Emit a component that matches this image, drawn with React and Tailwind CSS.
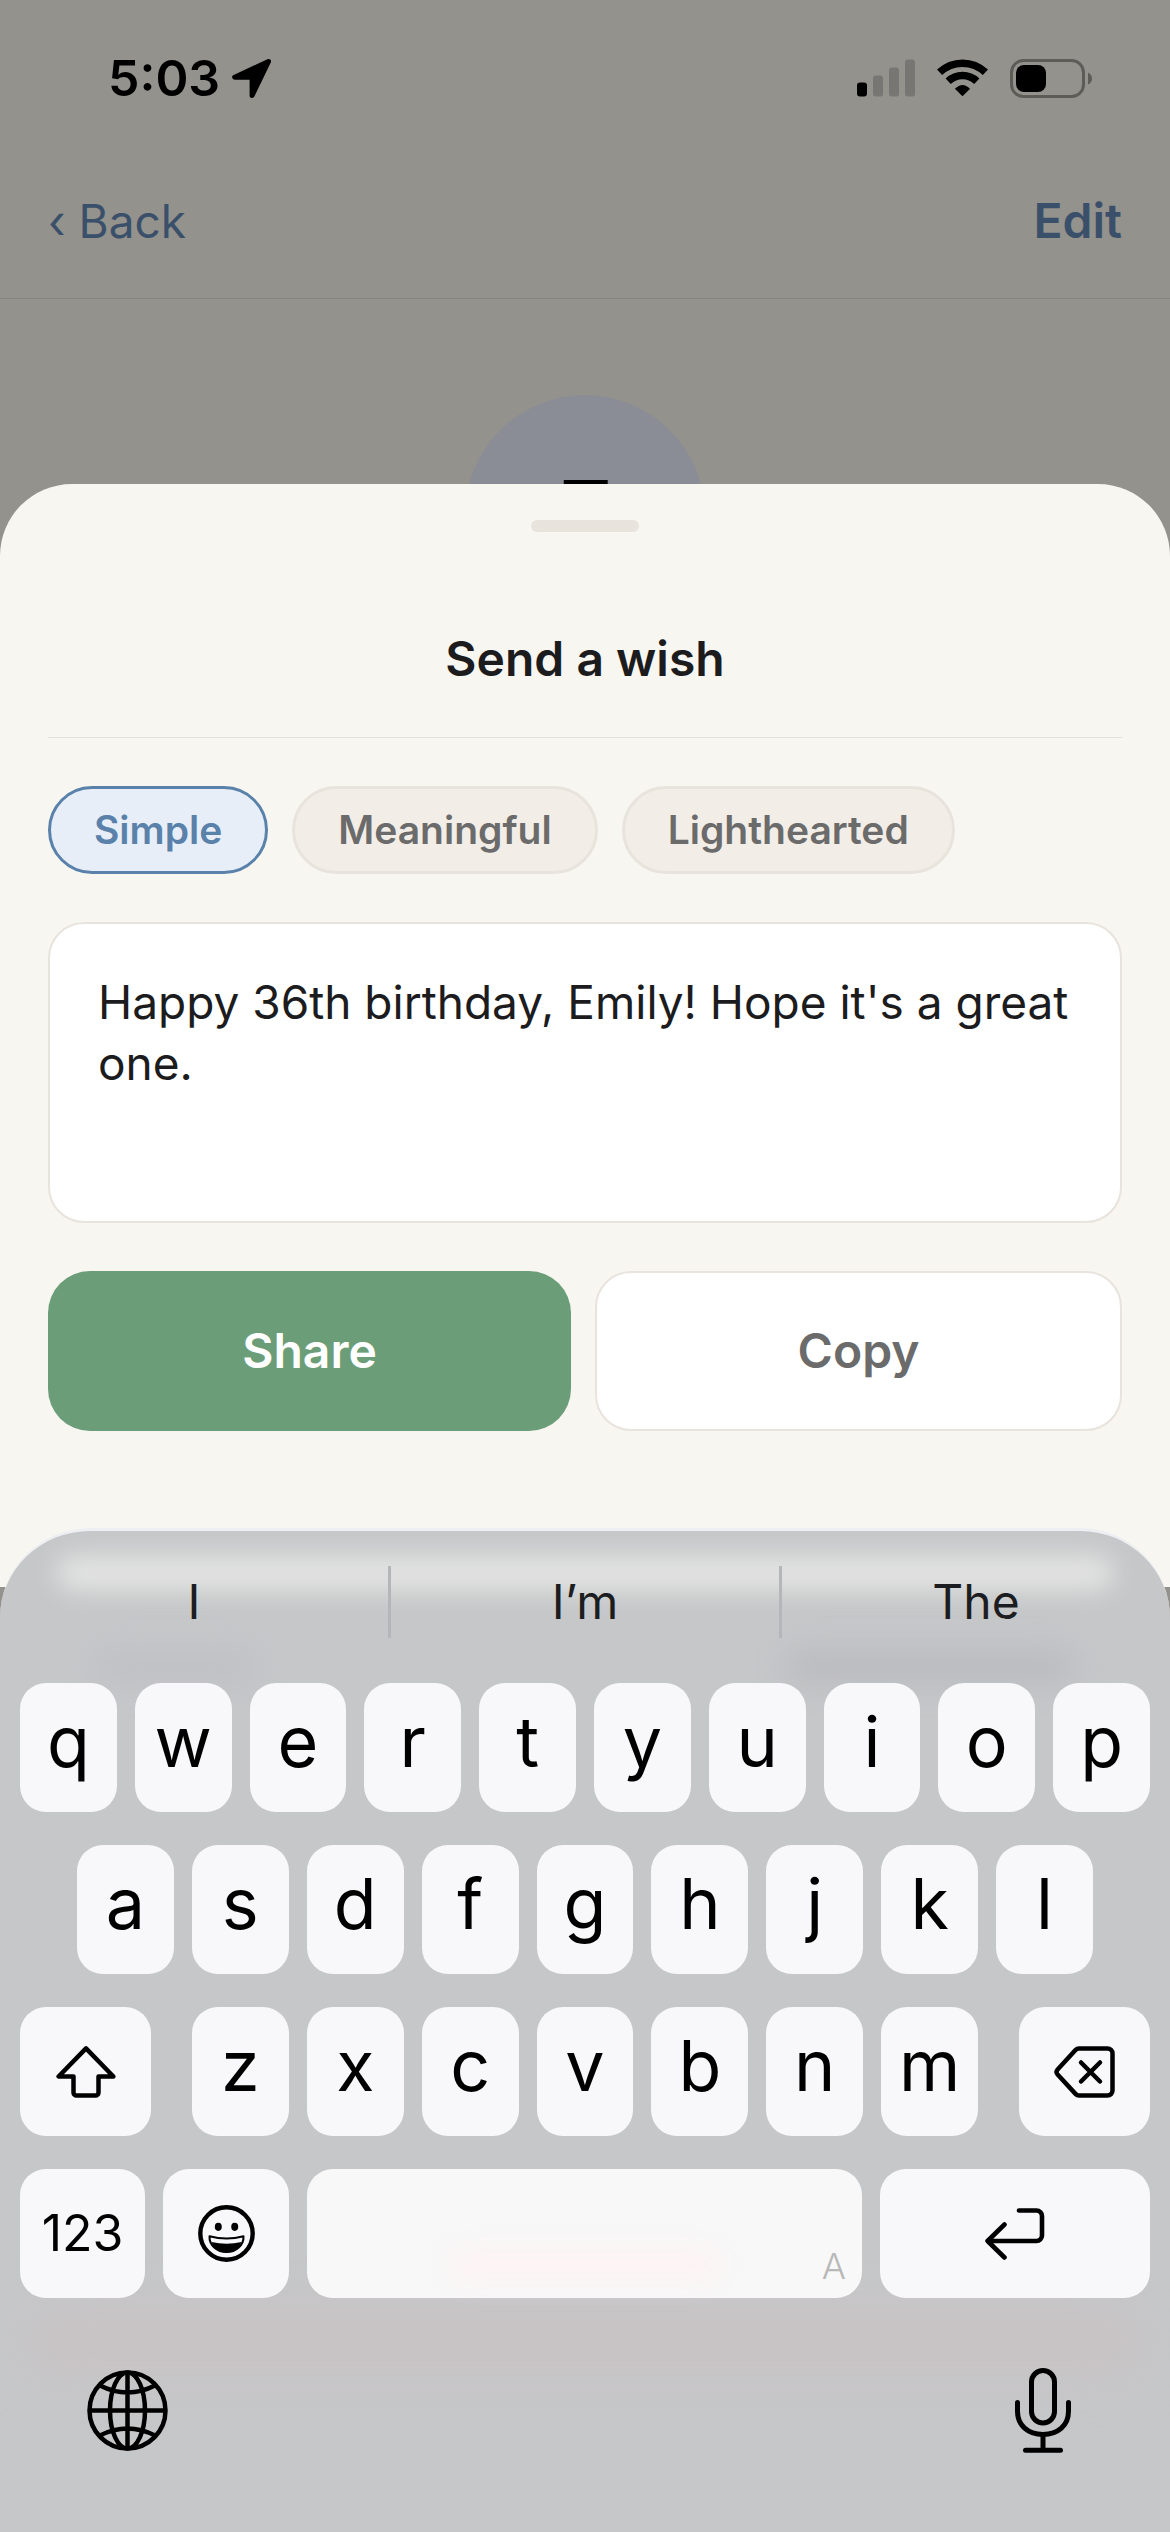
import { useState } from 'react'

const WISHES = {
  Simple: "Happy 36th birthday, Emily! Hope it's a great one.",
  Meaningful: 'Happy birthday, Emily! So grateful to have you in my life.',
  Lighthearted: 'Happy 36th, Emily! Eat all the cake today.',
}

const SUGGESTIONS = ['I', 'I’m', 'The']

function LocationIcon() {
  return (
    <svg className="h-[39px] w-[39px]" viewBox="0 0 39 39" aria-hidden="true">
      <path d="M36.5 2.5 2.7 18.2H20.1V36.5Z" fill="#000" stroke="#000" strokeWidth="5" strokeLinejoin="round" />
    </svg>
  )
}

function SignalIcon() {
  return (
    <svg className="h-[38px] w-[58px]" viewBox="0 0 58 38" aria-hidden="true">
      <rect x="0" y="23.5" width="10" height="14" rx="3" />
      <g fill="#777672">
        <rect x="16" y="16.5" width="10" height="21" rx="3" />
        <rect x="32" y="8.5" width="10" height="29" rx="3" />
        <rect x="48" y="0.5" width="10" height="37" rx="3" />
      </g>
    </svg>
  )
}

function WifiIcon() {
  return (
    <svg className="h-[38px] w-[51px]" viewBox="0 0 51 38" aria-hidden="true">
      <g fill="none" stroke="#000" strokeWidth="7.5">
        <path d="M2.6 13.3A33.2 33.2 0 0 1 48.4 13.3" />
        <path d="M11.2 22.3A20.7 20.7 0 0 1 39.8 22.3" />
      </g>
      <path d="M25.5 37.3 17.9 29.8Q25.5 22 33.1 29.8Z" />
    </svg>
  )
}

function BatteryIcon() {
  return (
    <svg className="h-[39px] w-[82px]" viewBox="0 0 82 39" aria-hidden="true">
      <rect x="1.5" y="1.5" width="72" height="36" rx="12" fill="none" stroke="#5d5c59" strokeWidth="3" />
      <rect x="6" y="6" width="30" height="27" rx="8" />
      <path d="M78 13.5Q82 15.5 82 19.5T78 25.5Z" fill="#5d5c59" />
    </svg>
  )
}

function ShiftIcon() {
  return (
    <svg className="h-[52px] w-[60px]" viewBox="0 0 60 52" fill="none" stroke="#000" strokeWidth="4.5" strokeLinejoin="round" aria-hidden="true">
      <path d="M30 2.4 2.6 30.5H17.5V46.5a3 3 0 0 0 3 3H39.5a3 3 0 0 0 3-3V30.5H57.4Z" />
    </svg>
  )
}

function BackspaceIcon() {
  return (
    <svg className="h-[52px] w-[61px]" viewBox="0 0 61 52" fill="none" stroke="#000" strokeWidth="4.5" strokeLinecap="round" strokeLinejoin="round" aria-hidden="true">
      <path d="M25 2.5H53.5a5 5 0 0 1 5 5V44.5a5 5 0 0 1-5 5H25q-2 0-3.5-1.6L3.4 28.2q-1.8-2.2 0-4.4L21.5 4.1Q23 2.5 25 2.5Z" />
      <path d="M27 16.5 46 35.5M46 16.5 27 35.5" />
    </svg>
  )
}

function ReturnIcon() {
  return (
    <svg className="h-[52px] w-[60px]" viewBox="0 0 60 52" fill="none" stroke="#000" strokeWidth="4.6" strokeLinecap="round" strokeLinejoin="round" aria-hidden="true">
      <path d="M34 2.5H51.5a5.5 5.5 0 0 1 5.5 5.5V27.5a5.5 5.5 0 0 1-5.5 5.5H3" />
      <path d="M19.5 16.5 2.6 33 19.5 49.5" />
    </svg>
  )
}

function EmojiIcon() {
  return (
    <svg className="h-[57px] w-[57px]" viewBox="0 0 57 57" aria-hidden="true">
      <circle cx="28.5" cy="28.5" r="26.2" fill="none" stroke="#000" strokeWidth="4.4" />
      <ellipse cx="20.3" cy="21.8" rx="3.5" ry="4.1" />
      <ellipse cx="36.7" cy="21.8" rx="3.5" ry="4.1" />
      <path d="M11.5 31.2Q28.5 36 45.5 31.2C46 40 38 47 28.5 47S11 40 11.5 31.2Z" fill="none" stroke="#000" strokeWidth="2" strokeLinejoin="round" />
      <path d="M13.5 37Q28.5 40.5 43.5 37C41 43.5 35.5 47.5 28.5 47.5S16 43.5 13.5 37Z" />
    </svg>
  )
}

function GlobeIcon() {
  return (
    <svg className="h-[81px] w-[81px]" viewBox="0 0 81 81" fill="none" stroke="#000" strokeWidth="4.5" aria-hidden="true">
      <circle cx="40.5" cy="40.5" r="38" />
      <ellipse cx="40.5" cy="40.5" rx="17.5" ry="38" />
      <path d="M40.5 2.5V78.5M2.5 40.5H78.5M13 15.5Q40.5 29.5 68 15.5M13 65.5Q40.5 51.5 68 65.5" />
    </svg>
  )
}

function MicIcon() {
  return (
    <svg className="h-[85px] w-[56px]" viewBox="0 0 56 85" fill="none" stroke="#000" strokeWidth="5" strokeLinecap="round" aria-hidden="true">
      <rect x="16.5" y="2.5" width="23" height="52.5" rx="11.5" />
      <path d="M2.5 34.5V43C2.5 57.5 13 66.5 28 66.5S53.5 57.5 53.5 43V34.5" />
      <path d="M28 67V82M10.5 82.3H45.5" />
    </svg>
  )
}

function Key({ label, className = 'flex-1', children }) {
  return (
    <button
      type="button"
      aria-label={label}
      className={`flex h-[129px] items-center justify-center rounded-[26px] bg-[#f8f8fa] ${className}`}
    >
      {children}
    </button>
  )
}

function LetterKeys({ letters }) {
  return letters.split('').map((letter) => (
    <Key key={letter} className="flex-1 pb-3 text-[70px]">
      {letter}
    </Key>
  ))
}

function Screen() {
  return (
    <div className="col-start-1 row-start-1 bg-[#94928c]">
      <div className="flex h-36 items-center justify-between pt-3 pr-[78px] pl-[108px]">
        <div className="flex items-center gap-3">
          <span className="text-[50px] font-semibold">5:03</span>
          <LocationIcon />
        </div>
        <div className="flex items-center gap-[22px]">
          <SignalIcon />
          <WifiIcon />
          <BatteryIcon />
        </div>
      </div>
      <header className="flex h-[155px] items-center justify-between border-b border-[#878580] px-12 text-[#3a506a]">
        <button type="button" className="text-[46px]">‹ Back</button>
        <button type="button" className="text-[48px] font-semibold">Edit</button>
      </header>
      <div className="mx-auto mt-24 flex size-60 items-center justify-center rounded-full bg-[#8a8d95] text-[96px] font-medium">
        E
      </div>
    </div>
  )
}

function WishSheet() {
  const [tone, setTone] = useState('Simple')
  const [text, setText] = useState(WISHES.Simple)

  const pickTone = (name) => {
    setTone(name)
    setText(WISHES[name])
  }

  return (
    <section className="flex flex-col rounded-t-[72px] bg-[#f7f6f1] px-12 pt-9 pb-[156px]">
      <div className="mx-auto h-3 w-[108px] rounded-full bg-[#e8e3dc]" />
      <h1 className="mt-24 border-b border-[#e3e1dc] pb-12 text-center text-[48px] leading-[61px] font-semibold text-[#1c1c1e]">
        Send a wish
      </h1>
      <div className="mt-12 flex gap-6">
        {Object.keys(WISHES).map((name) => (
          <button
            key={name}
            type="button"
            aria-pressed={tone === name}
            onClick={() => pickTone(name)}
            className={`h-[88px] rounded-full border-3 px-[43px] text-[39px] font-semibold ${
              tone === name
                ? 'border-[#5a81aa] bg-[#e7eef8] text-[#5a81aa]'
                : 'border-[#e8e3dc] bg-[#f2eee7] text-[#6b6b6b]'
            }`}
          >
            {name}
          </button>
        ))}
      </div>
      <textarea
        aria-label="Wish message"
        value={text}
        onChange={(e) => setText(e.target.value)}
        className="mt-12 h-[301px] resize-none rounded-[36px] border-2 border-[#e8e3dc] bg-white p-12 text-[46px] leading-[61px] text-[#1c1c1e] outline-none"
      />
      <div className="mt-12 flex gap-6 text-[48px] font-semibold">
        <button type="button" className="h-40 flex-1 rounded-[42px] bg-[#6b9e78] text-white">
          Share
        </button>
        <button type="button" className="h-40 flex-1 rounded-[36px] border-2 border-[#e8e3dc] bg-white text-[#6b6b6b]">
          Copy
        </button>
      </div>
    </section>
  )
}

function Keyboard() {
  return (
    <section
      aria-label="Keyboard"
      className="relative isolate -mt-[59px] overflow-hidden rounded-t-[90px] border-t-3 border-[#eeeff3] bg-[#c6c7c9] pt-[35px] pb-[68px]"
    >
      {/* glow from the content behind the glass */}
      <div className="absolute inset-x-14 top-6 -z-10 h-9 rounded-full bg-[#e2e3e2] blur-md" />
      <div className="absolute top-[120px] left-24 -z-10 h-8 w-40 rounded-full bg-[#bfc0c3] blur-lg" />
      <div className="absolute top-[120px] right-24 -z-10 h-8 w-72 rounded-full bg-[#b9babd] blur-lg" />
      <div className="absolute inset-x-6 top-[780px] -z-10 h-16 rounded-full bg-[#c8c3c4] blur-xl" />

      <div className="flex h-[72px] items-center divide-x-3 divide-[#b5b6b9] text-[48px] text-[#1c1d20]">
        {SUGGESTIONS.map((word) => (
          <button key={word} type="button" className="h-full flex-1">
            {word}
          </button>
        ))}
      </div>

      <div className="mt-[45px] flex flex-col gap-[33px] px-5">
        <div className="flex gap-[18px]">
          <LetterKeys letters="qwertyuiop" />
        </div>
        <div className="flex gap-[18px] px-[57px]">
          <LetterKeys letters="asdfghjkl" />
        </div>
        <div className="flex gap-[41px]">
          <Key label="Shift" className="w-[131px]">
            <ShiftIcon />
          </Key>
          <div className="flex flex-1 gap-[18px]">
            <LetterKeys letters="zxcvbnm" />
          </div>
          <Key label="Delete" className="w-[131px]">
            <BackspaceIcon />
          </Key>
        </div>
        <div className="flex gap-[18px]">
          <Key className="w-[125px] text-[50px]">123</Key>
          <Key label="Emoji" className="w-[126px]">
            <EmojiIcon />
          </Key>
          <button
            type="button"
            aria-label="Space"
            className="relative flex h-[129px] flex-1 items-end justify-end rounded-[26px] bg-[#f8f8f8] px-4 pb-2 text-[36px] leading-[48px] font-light text-[#b8b8b8]"
          >
            <span className="absolute top-20 left-1/4 h-8 w-1/2 rounded-full bg-[#fcf3f2] blur-md" />
            A
          </button>
          <Key label="Return" className="w-[270px]">
            <ReturnIcon />
          </Key>
        </div>
      </div>

      <div className="mt-[58px] flex h-[108px] items-center justify-between pr-[99px] pl-[87px]">
        <button type="button" aria-label="Next keyboard">
          <GlobeIcon />
        </button>
        <button type="button" aria-label="Dictate">
          <MicIcon />
        </button>
      </div>
    </section>
  )
}

export default function App() {
  return (
    <main className="grid min-h-screen font-['Inter',sans-serif] text-black">
      <Screen />
      <div className="z-10 col-start-1 row-start-1 flex flex-col justify-end">
        <WishSheet />
        <Keyboard />
      </div>
    </main>
  )
}
